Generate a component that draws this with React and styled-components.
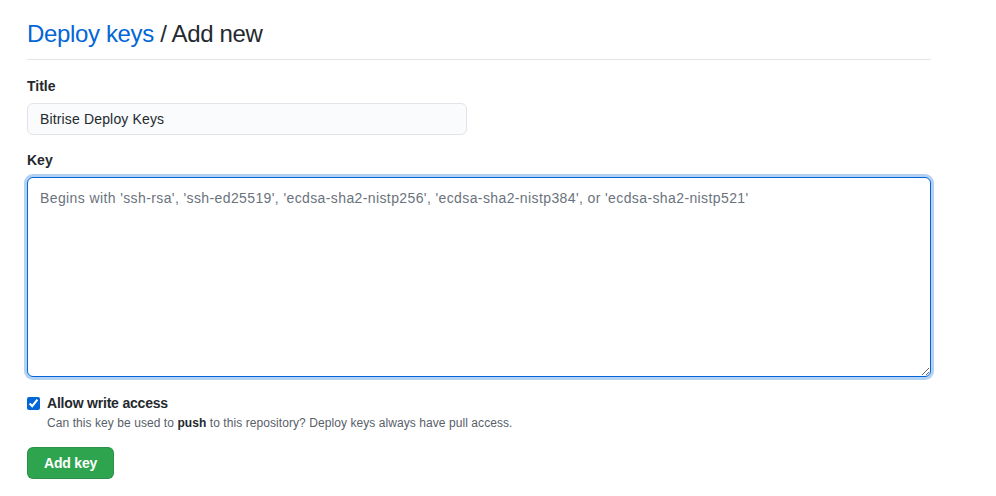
import React, { useState } from 'react';
import styled, { createGlobalStyle } from 'styled-components';

const GlobalStyle = createGlobalStyle`
  body {
    margin: 0;
    background: #ffffff;
    font-family: "Liberation Sans", Arial, sans-serif;
    color: #24292e;
  }
`;

const Page = styled.div`
  width: 904px;
  padding: 16px 27px;
`;

const Heading = styled.h2`
  margin: 0 0 16px;
  padding-bottom: 7px;
  border-bottom: 1px solid #e1e4e8;
  font-size: 24px;
  font-weight: 400;
  line-height: 36px;
  letter-spacing: -0.35px;
`;

const Crumb = styled.a`
  color: #0366d6;
  text-decoration: none;
`;

const Group = styled.div`
  margin-bottom: 15px;
`;

const Label = styled.label`
  display: block;
  margin-bottom: 6px;
  font-size: 14px;
  font-weight: 700;
  line-height: 21px;
`;

const Input = styled.input`
  box-sizing: border-box;
  width: 440px;
  height: 32px;
  padding: 5px 12px;
  font-family: inherit;
  font-size: 14px;
  letter-spacing: 0.15px;
  color: #24292e;
  background: #fafbfc;
  border: 1px solid #e1e4e8;
  border-radius: 6px;
  outline: none;
`;

const TextArea = styled.textarea`
  display: block;
  box-sizing: border-box;
  width: 904px;
  height: 200px;
  padding: 10px 12px;
  font-family: inherit;
  font-size: 14px;
  line-height: 20px;
  letter-spacing: 0.39px;
  color: #24292e;
  background: #ffffff;
  border: 1px solid #0366d6;
  border-radius: 6px;
  box-shadow: 0 0 0 3px rgba(3, 102, 214, 0.3);
  outline: none;
  resize: vertical;

  &::placeholder {
    color: #6a737d;
  }
`;

const CheckRow = styled.div`
  display: flex;
  align-items: flex-start;
  gap: 7px;
  margin: 16px 0 15px;
`;

const Check = styled.input`
  width: 13px;
  height: 13px;
  margin: 4px 0 0;
  accent-color: #0366d6;
`;

const CheckText = styled.div`
  display: flex;
  flex-direction: column;
`;

const CheckLabel = styled.label`
  font-size: 14px;
  font-weight: 700;
  line-height: 21px;
  letter-spacing: -0.2px;
`;

const Note = styled.p`
  margin: 0;
  font-size: 12px;
  line-height: 18px;
  letter-spacing: 0.07px;
  color: #586069;

  strong {
    color: #24292e;
  }
`;

const Button = styled.button`
  height: 32px;
  padding: 0 16px;
  font-family: inherit;
  font-size: 14px;
  font-weight: 700;
  letter-spacing: -0.2px;
  color: #ffffff;
  background: #2ea44f;
  border: 1px solid rgba(27, 31, 35, 0.15);
  border-radius: 6px;
  cursor: pointer;

  &:hover {
    background: #2c974b;
  }
`;

export default function App() {
  const [title, setTitle] = useState('Bitrise Deploy Keys');
  const [key, setKey] = useState('');
  const [write, setWrite] = useState(true);

  return (
    <Page>
      <GlobalStyle />
      <Heading>
        <Crumb href="#">Deploy keys</Crumb> / Add new
      </Heading>
      <Group>
        <Label htmlFor="title">Title</Label>
        <Input id="title" value={title} onChange={(e) => setTitle(e.target.value)} />
      </Group>
      <Group>
        <Label htmlFor="key">Key</Label>
        <TextArea
          id="key"
          value={key}
          onChange={(e) => setKey(e.target.value)}
          placeholder="Begins with 'ssh-rsa', 'ssh-ed25519', 'ecdsa-sha2-nistp256', 'ecdsa-sha2-nistp384', or 'ecdsa-sha2-nistp521'"
        />
      </Group>
      <CheckRow>
        <Check id="write" type="checkbox" checked={write} onChange={(e) => setWrite(e.target.checked)} />
        <CheckText>
          <CheckLabel htmlFor="write">Allow write access</CheckLabel>
          <Note>
            Can this key be used to <strong>push</strong> to this repository? Deploy keys always have pull access.
          </Note>
        </CheckText>
      </CheckRow>
      <Button type="button">Add key</Button>
    </Page>
  );
}
